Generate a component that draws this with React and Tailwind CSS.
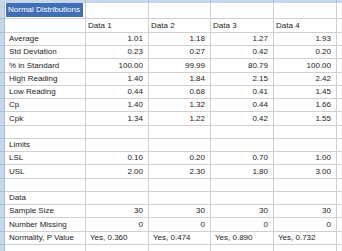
const rows = [
  { label: "Average", values: ["1.01", "1.18", "1.27", "1.93"] },
  { label: "Std Deviation", values: ["0.23", "0.27", "0.42", "0.20"] },
  { label: "% in Standard", values: ["100.00", "99.99", "80.79", "100.00"], tall: true },
  { label: "High Reading", values: ["1.40", "1.84", "2.15", "2.42"] },
  { label: "Low Reading", values: ["0.44", "0.68", "0.41", "1.45"] },
  { label: "Cp", values: ["1.40", "1.32", "0.44", "1.66"] },
  { label: "Cpk", values: ["1.34", "1.22", "0.42", "1.55"], tall: true },
  { label: "", values: ["", "", "", ""] },
  { label: "Limits", values: ["", "", "", ""] },
  { label: "LSL", values: ["0.10", "0.20", "0.70", "1.00"] },
  { label: "USL", values: ["2.00", "2.30", "1.80", "3.00"], tall: true },
  { label: "", values: ["", "", "", ""] },
  { label: "Data", values: ["", "", "", ""] },
  { label: "Sample Size", values: ["30", "30", "30", "30"] },
  { label: "Number Missing", values: ["0", "0", "0", "0"], tall: true },
  { label: "Normality, P Value", values: ["Yes, 0.360", "Yes, 0.474", "Yes, 0.890", "Yes, 0.732"], left: true },
  { label: "", values: ["", "", "", ""] },
];

const widths = ["w-[63px]", "w-[62px]", "w-[63px]", "w-[63px]"];

function Row({ children, h }) {
  return (
    <div className={`flex ${h}`}>
      <div className="w-[5px] shrink-0 bg-[#c8d6eb] border-r border-b border-[#a8bcdc]"></div>
      {children}
      <div className="flex-1 border-b border-[#d0d0d0]"></div>
    </div>
  );
}

export default function App() {
  return (
    <div
      className="w-[342px] h-[251px] overflow-hidden bg-white text-[8px] leading-none text-[#222]"
      style={{ fontFamily: '"Liberation Sans", Arial, sans-serif' }}
    >
      <div className="h-[3px] bg-[#c8d6eb] flex">
        <div className="w-[86px] border-r border-[#a8bcdc]"></div>
        {widths.map((w, i) => (
          <div key={i} className={`${w} border-r border-[#a8bcdc]`}></div>
        ))}
      </div>

      <Row h="h-[16px]">
        <div className="w-[81px] shrink-0 border-r border-b border-[#d0d0d0] pl-[1px] pb-[1px]">
          <div className="h-full w-[77px] bg-[#3f6fb5] text-white flex items-center pl-[2px]">
            Normal Distributions
          </div>
        </div>
        {widths.map((w, i) => (
          <div key={i} className={`${w} shrink-0 border-r border-b border-[#d0d0d0]`}></div>
        ))}
      </Row>

      <Row h="h-[14px]">
        <div className="w-[81px] shrink-0 border-r border-b border-[#d0d0d0]"></div>
        {widths.map((w, i) => (
          <div key={i} className={`${w} shrink-0 border-r border-b border-[#d0d0d0] flex items-center pl-[2px]`}>
            Data {i + 1}
          </div>
        ))}
      </Row>

      {rows.map((r, idx) => (
        <Row key={idx} h={r.tall ? "h-[14px]" : "h-[13px]"}>
          <div className="w-[81px] shrink-0 border-r border-b border-[#d0d0d0] flex items-center pl-[4px]">
            {r.label}
          </div>
          {r.values.map((v, i) => (
            <div
              key={i}
              className={`${widths[i]} shrink-0 border-r border-b border-[#d0d0d0] flex items-center ${
                r.left ? "pl-[4px]" : "justify-end pr-[5px]"
              }`}
            >
              {v}
            </div>
          ))}
        </Row>
      ))}
    </div>
  );
}
